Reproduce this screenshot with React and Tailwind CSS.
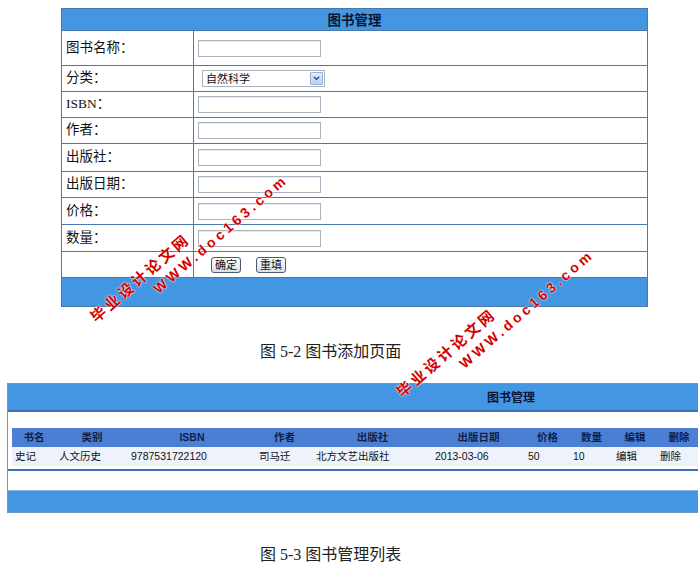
import React from "react";

const serifCJK = { fontFamily: '"Liberation Serif", "Noto Sans CJK SC", serif' };

function Input() {
  return <div className="h-[17px] w-[123px] border border-[#a9b4c2] bg-white shadow-[inset_0_1px_0_#e6e9ee]" />;
}

function Select() {
  return (
    <div className="flex h-[17px] w-[123px] items-center justify-between border border-[#a9b4c2] bg-white pl-[3px] pr-px">
      <span className="text-[11px] leading-none text-[#111]" style={{ fontFamily: '"Noto Sans CJK SC", sans-serif' }}>自然科学</span>
      <span className="flex h-[13px] w-[13px] items-center justify-center rounded-[1px] border border-[#98b1dc] bg-gradient-to-b from-[#e3ecfb] to-[#bcd0f3]">
        <svg width="7" height="5" viewBox="0 0 7 5"><path d="M0.8 0.8 L3.5 3.6 L6.2 0.8" fill="none" stroke="#2d4d8a" strokeWidth="1.4" /></svg>
      </span>
    </div>
  );
}

function Btn({ children }) {
  return (
    <div className="flex h-[16px] w-[30px] items-center justify-center rounded-[3px] border border-[#4b5a6e] bg-gradient-to-b from-[#ffffff] to-[#dcdfe4] text-[11px] leading-none text-[#111]" style={{ fontFamily: '"Noto Sans CJK SC", sans-serif' }}>
      {children}
    </div>
  );
}

const rows = [
  { label: "图书名称：", h: "h-[35px]", el: <div className="pl-[4px]"><Input /></div> },
  { label: "分类：", h: "h-[26px]", el: <div className="pl-[8px]"><Select /></div> },
  { label: "ISBN：", h: "h-[26px]", el: <div className="pl-[4px]"><Input /></div> },
  { label: "作者：", h: "h-[26px]", el: <div className="pl-[4px]"><Input /></div> },
  { label: "出版社：", h: "h-[28px]", el: <div className="pl-[4px]"><Input /></div> },
  { label: "出版日期：", h: "h-[26px]", el: <div className="pl-[4px]"><Input /></div> },
  { label: "价格：", h: "h-[27px]", el: <div className="pl-[4px]"><Input /></div> },
  { label: "数量：", h: "h-[27px]", el: <div className="pl-[4px]"><Input /></div> },
];

const cols = [
  { h: "书名", d: "史记", w: "w-[44px]" },
  { h: "类别", d: "人文历史", w: "w-[72px]" },
  { h: "ISBN", d: "9787531722120", w: "w-[128px]" },
  { h: "作者", d: "司马迁", w: "w-[57px]" },
  { h: "出版社", d: "北方文艺出版社", w: "w-[119px]" },
  { h: "出版日期", d: "2013-03-06", w: "w-[93px]" },
  { h: "价格", d: "50", w: "w-[45px]" },
  { h: "数量", d: "10", w: "w-[43px]" },
  { h: "编辑", d: "编辑", w: "w-[44px]" },
  { h: "删除", d: "删除", w: "w-[44px]" },
];

function Watermark({ left, top }) {
  const shadow = "[text-shadow:0_0_2px_#fff,0_0_1px_#fff]";
  return (
    <div className="pointer-events-none absolute h-0 w-0 origin-top-left -rotate-[41deg]" style={{ left, top }}>
      <div
        className={`absolute bottom-0 left-0 whitespace-nowrap text-[15px] font-bold leading-[15px] tracking-[3px] text-[#d40000] ${shadow}`}
        style={{ fontFamily: '"Noto Sans CJK SC", sans-serif' }}
      >
        毕业设计论文网
      </div>
      <div
        className={`absolute left-[66px] top-[6px] whitespace-nowrap text-[14px] font-bold leading-[14px] tracking-[3.5px] text-[#d40000] ${shadow}`}
        style={{ fontFamily: '"Liberation Sans", Arial, sans-serif' }}
      >
        WWW.doc163.com
      </div>
    </div>
  );
}

export default function App() {
  return (
    <div className="relative h-[588px] w-[698px] overflow-hidden bg-white" style={{ fontFamily: '"Noto Sans CJK SC", sans-serif' }}>
      {/* Top form table */}
      <div className="ml-[61px] pt-[8px]">
        <div className="w-[587px] border border-[#4a78a8]">
          <div className="flex h-[22px] items-center justify-center border-b border-[#4a78a8] bg-[#4397e2] text-[13.5px] font-bold text-[#0b1633]">
            图书管理
          </div>
          {rows.map((r, i) => (
            <div key={i} className={`grid grid-cols-[132px_1fr] border-b border-[#4a78a8] ${r.h}`}>
              <div className="flex items-center border-r border-[#4a78a8] pl-[4px] text-[13.5px] text-[#111]" style={serifCJK}>
                {r.label}
              </div>
              <div className="flex items-center">{r.el}</div>
            </div>
          ))}
          <div className="grid h-[26px] grid-cols-[132px_1fr] border-b border-[#4a78a8]">
            <div className="border-r border-[#4a78a8]" />
            <div className="flex items-center gap-[15px] pl-[17px]">
              <Btn>确定</Btn>
              <Btn>重填</Btn>
            </div>
          </div>
          <div className="h-[28px] bg-[#4397e2]" />
        </div>
      </div>

      {/* Caption 1 */}
      <div className="pl-[260px] pt-[35px] text-[16px] leading-[20px] text-[#222]" style={serifCJK}>
        图 5-2 图书添加页面
      </div>

      {/* Bottom list table */}
      <div className="ml-[7px] pt-[21px]">
        <div className="w-[1008px] border border-[#6f95bf]">
          <div className="flex h-[28px] items-center justify-center border-b-2 border-[#3a72b5] bg-[#4397e2] text-[12px] font-bold text-[#0b1633]" style={{ fontFamily: '"Noto Sans CJK SC", sans-serif' }}>
            图书管理
          </div>
          <div className="px-[4px] pb-[3px] pt-[16px]">
            <div className="flex h-[19px] bg-[#4a7fd4]">
              {cols.map((c, i) => (
                <div key={i} className={`${c.w} flex items-center justify-center text-[10.5px] font-bold text-[#0f1f4a]`} style={{ fontFamily: '"Liberation Sans", "Noto Sans CJK SC", sans-serif' }}>
                  {c.h}
                </div>
              ))}
            </div>
            <div className="flex h-[19px] bg-[#eef3fb]">
              {cols.map((c, i) => (
                <div key={i} className={`${c.w} flex items-center pl-[3px] text-[10.5px] text-[#111]`} style={{ fontFamily: '"Liberation Sans", "Noto Sans CJK SC", sans-serif' }}>
                  {c.d}
                </div>
              ))}
            </div>
          </div>
          <div className="h-[21px] border-t-2 border-[#3a72b5] bg-white" />
          <div className="h-[22px] border-t border-[#8fb3dc] bg-[#4397e2]" />
        </div>
      </div>

      {/* Caption 2 */}
      <div className="pl-[260px] pt-[32px] text-[16px] leading-[20px] text-[#222]" style={serifCJK}>
        图 5-3 图书管理列表
      </div>

      <Watermark left={97} top={324} />
      <Watermark left={403} top={399} />
    </div>
  );
}
